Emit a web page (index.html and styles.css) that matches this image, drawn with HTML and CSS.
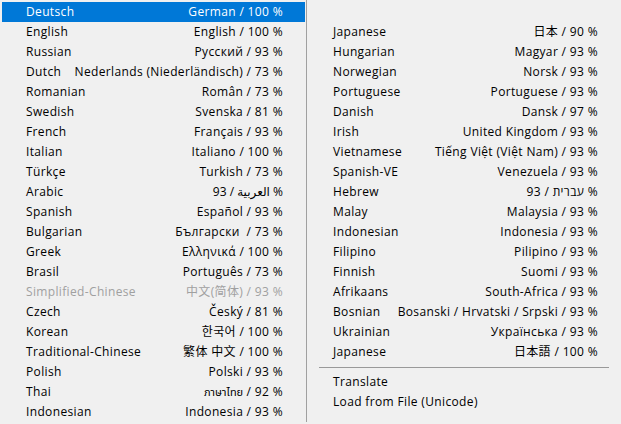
FILE: index.html
```html
<!DOCTYPE html>
<html lang="en">
<head>
<meta charset="utf-8">
<title>Language menu</title>
<link rel="stylesheet" href="styles.css">
</head>
<body>
<div class="menu">
  <ul class="col col-left">
    <li class="item active"><span>Deutsch</span><span>German / 100 %</span></li>
    <li class="item"><span>English</span><span>English / 100 %</span></li>
    <li class="item"><span>Russian</span><span>Русский / 93 %</span></li>
    <li class="item"><span>Dutch</span><span>Nederlands (Niederländisch) / 73 %</span></li>
    <li class="item"><span>Romanian</span><span>Român / 73 %</span></li>
    <li class="item"><span>Swedish</span><span>Svenska / 81 %</span></li>
    <li class="item"><span>French</span><span>Français / 93 %</span></li>
    <li class="item"><span>Italian</span><span>Italiano / 100 %</span></li>
    <li class="item"><span>Türkçe</span><span>Turkish / 73 %</span></li>
    <li class="item"><span>Arabic</span><span class="ltr">93 / <bdi>العربية</bdi> %</span></li>
    <li class="item"><span>Spanish</span><span>Español / 93 %</span></li>
    <li class="item"><span>Bulgarian</span><span>Български&nbsp; / 73 %</span></li>
    <li class="item"><span>Greek</span><span>Ελληνικά / 100 %</span></li>
    <li class="item"><span>Brasil</span><span>Português / 73 %</span></li>
    <li class="item disabled"><span>Simplified-Chinese</span><span lang="zh-CN">中文(简体) / 93 %</span></li>
    <li class="item"><span>Czech</span><span>Český / 81 %</span></li>
    <li class="item"><span>Korean</span><span lang="ko">한국어 / 100 %</span></li>
    <li class="item"><span>Traditional-Chinese</span><span lang="zh-CN">繁体 中文 / 100 %</span></li>
    <li class="item"><span>Polish</span><span>Polski / 93 %</span></li>
    <li class="item"><span>Thai</span><span><span class="thai">ภาษาไทย</span> / 92 %</span></li>
    <li class="item"><span>Indonesian</span><span>Indonesia / 93 %</span></li>
  </ul>
  <div class="vsep"></div>
  <ul class="col col-right">
    <li class="item"><span>Japanese</span><span lang="ja">日本 / 90 %</span></li>
    <li class="item"><span>Hungarian</span><span>Magyar / 93 %</span></li>
    <li class="item"><span>Norwegian</span><span>Norsk / 93 %</span></li>
    <li class="item"><span>Portuguese</span><span>Portuguese / 93 %</span></li>
    <li class="item"><span>Danish</span><span>Dansk / 97 %</span></li>
    <li class="item"><span>Irish</span><span>United Kingdom / 93 %</span></li>
    <li class="item"><span>Vietnamese</span><span>Tiếng Việt (Việt Nam) / 93 %</span></li>
    <li class="item"><span>Spanish-VE</span><span>Venezuela / 93 %</span></li>
    <li class="item"><span>Hebrew</span><span class="ltr">93 / <bdi>עברית</bdi> %</span></li>
    <li class="item"><span>Malay</span><span>Malaysia / 93 %</span></li>
    <li class="item"><span>Indonesian</span><span>Indonesia / 93 %</span></li>
    <li class="item"><span>Filipino</span><span>Pilipino / 93 %</span></li>
    <li class="item"><span>Finnish</span><span>Suomi / 93 %</span></li>
    <li class="item"><span>Afrikaans</span><span>South-Africa / 93 %</span></li>
    <li class="item"><span>Bosnian</span><span>Bosanski / Hrvatski / Srpski / 93 %</span></li>
    <li class="item"><span>Ukrainian</span><span>Українська / 93 %</span></li>
    <li class="item"><span>Japanese</span><span lang="ja">日本語 / 100 %</span></li>
    <li class="hsep"></li>
    <li class="item"><span>Translate</span></li>
    <li class="item"><span>Load from File (Unicode)</span></li>
  </ul>
</div>
</body>
</html>
```

FILE: styles.css
```css
html, body {
  margin: 0;
  padding: 0;
  background: #f0f0f0;
}

body {
  font-family: "Open Sans", "Noto Sans", "Noto Sans CJK SC", "DejaVu Sans", sans-serif;
  font-size: 12px;
  letter-spacing: 0.35px;
  color: #000;
  width: 621px;
  height: 424px;
  overflow: hidden;
}

.menu {
  display: flex;
  height: 422px;
}

.col {
  list-style: none;
  margin: 0;
  padding: 0;
}

.col-left {
  width: 303px;
  margin: 2px 0 0 2px;
}

.col-left .item {
  padding: 0 22px 0 24px;
}

.vsep {
  width: 1px;
  background: #a0a0a0;
  margin-left: 1px;
}

.col-right {
  width: 302px;
  margin-left: 2px;
  padding-top: 22px;
}

.col-right .item {
  padding: 0 13px 0 24px;
}

.item {
  height: 20px;
  line-height: 20px;
  display: flex;
  justify-content: space-between;
  white-space: nowrap;
}

.item.active {
  background: #0078d7;
  color: #fff;
}

.item.disabled {
  color: #a0a0a0;
}

.ltr {
  direction: ltr;
  unicode-bidi: isolate;
}

.thai {
  font-family: "Noto Sans Thai", "Tlwg Typist", "Loma", "Garuda", "DejaVu Sans", sans-serif;
  font-size: 11px;
  letter-spacing: 0;
}

[lang="ja"] {
  font-family: "Open Sans", "Noto Sans CJK JP", sans-serif;
}

[lang="ko"] {
  font-family: "Open Sans", "Noto Sans CJK KR", sans-serif;
}

[lang="zh-CN"] {
  font-family: "Open Sans", "Noto Sans CJK SC", sans-serif;
}

.hsep {
  height: 10px;
  box-sizing: border-box;
  padding-top: 5px;
  margin: 0 2px 0 10px;
  display: flex;
  flex-direction: column;
}

.hsep::after {
  content: "";
  height: 1px;
  background: #999;
}
```
